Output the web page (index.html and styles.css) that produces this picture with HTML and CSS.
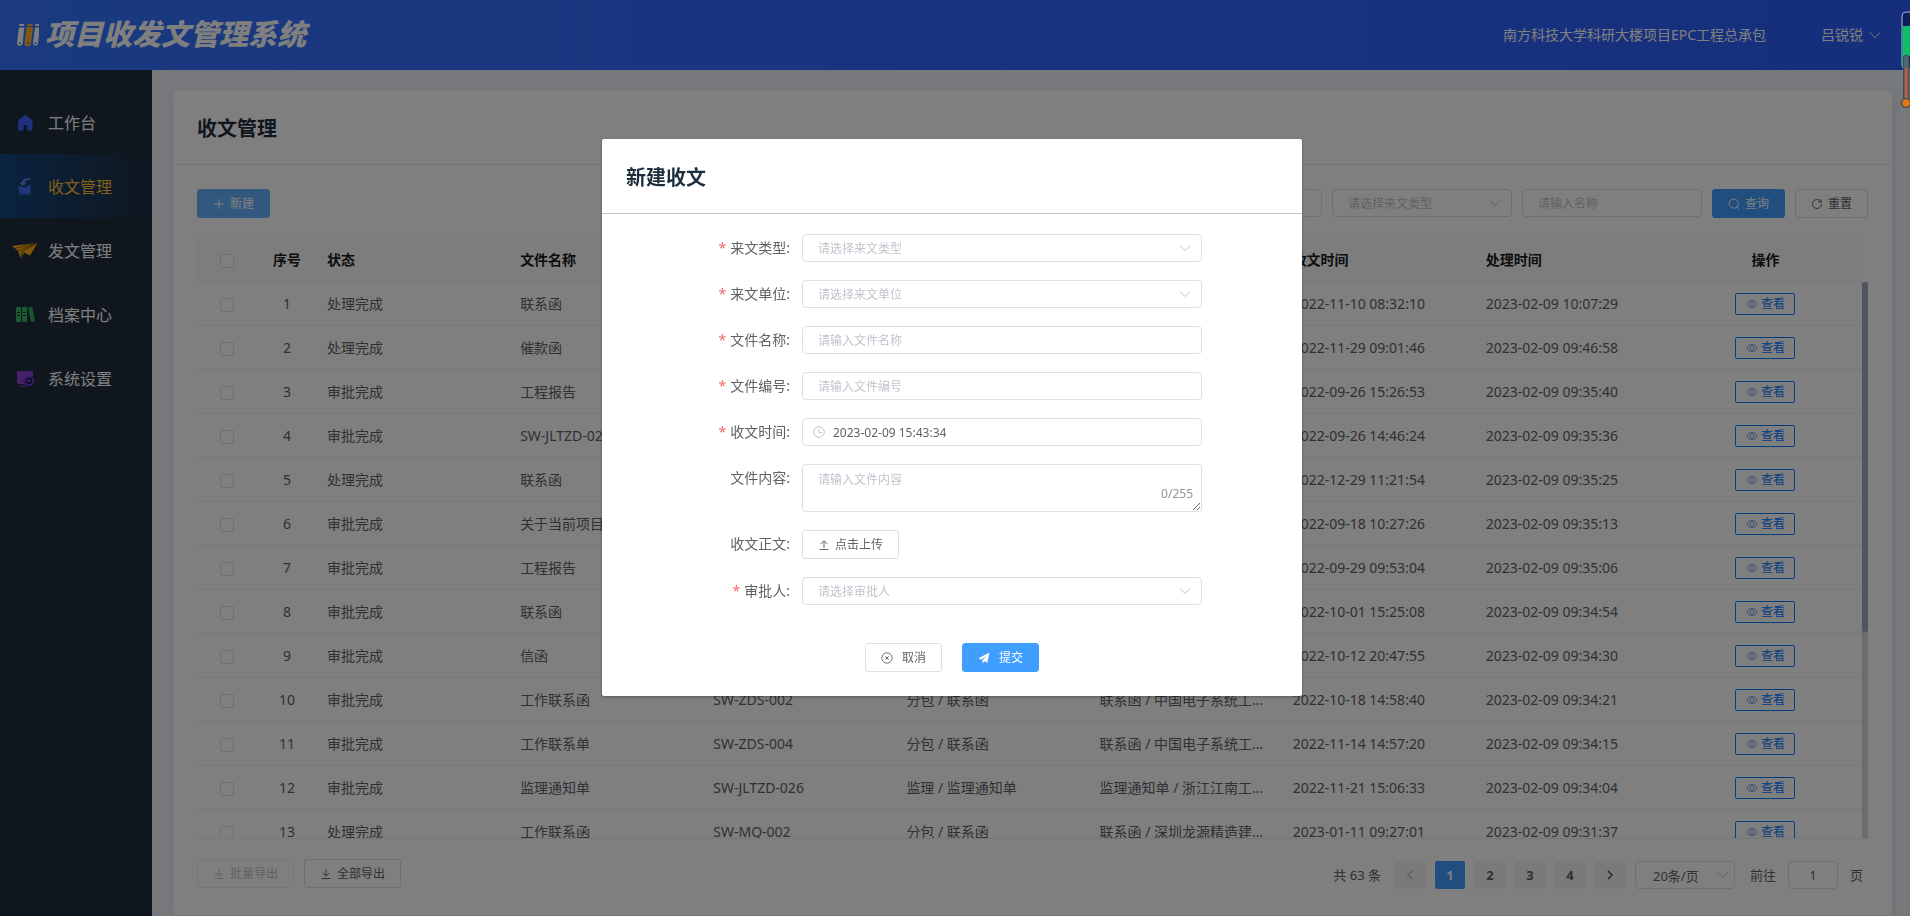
FILE: index.html
```html
<!DOCTYPE html>
<html lang="zh-CN">
<head>
<meta charset="utf-8">
<title>项目收发文管理系统</title>
<link rel="stylesheet" href="styles.css">
</head>
<body>
<svg class="defs" aria-hidden="true">
  <symbol id="i-down" viewBox="0 0 12 12"><path d="M1 3.5l5 5 5-5" fill="none" stroke="currentColor"/></symbol>
  <symbol id="i-plus" viewBox="0 0 12 12"><path d="M6 1v10M1 6h10" fill="none" stroke="currentColor"/></symbol>
  <symbol id="i-search" viewBox="0 0 12 12"><circle cx="5.8" cy="5.6" r="4.6" fill="none" stroke="currentColor"/><path d="M9 9l2 2" stroke="currentColor"/></symbol>
  <symbol id="i-refresh" viewBox="0 0 12 12"><path d="M9.8 3.6A4.5 4.5 0 1 0 10.5 6M10.3 1.2v2.9H7.4" fill="none" stroke="currentColor"/></symbol>
  <symbol id="i-view" viewBox="0 0 12 12"><path d="M.6 6C3.2 1.4 8.8 1.4 11.4 6 8.8 10.6 3.2 10.6.6 6z" fill="none" stroke="currentColor" stroke-width=".9"/><circle cx="6" cy="6" r="2" fill="none" stroke="currentColor" stroke-width=".9"/></symbol>
  <symbol id="i-download" viewBox="0 0 12 12"><path d="M6 1v7M2.8 5L6 8.2 9.2 5M1.5 10.5h9" fill="none" stroke="currentColor"/></symbol>
  <symbol id="i-upload" viewBox="0 0 12 12"><path d="M6 9V2M2.8 5L6 1.8 9.2 5M1.5 10.5h9" fill="none" stroke="currentColor"/></symbol>
  <symbol id="i-clock" viewBox="0 0 12 12"><circle cx="6" cy="6" r="5.3" fill="none" stroke="currentColor"/><path d="M6 2.8V6.5h2.8" fill="none" stroke="currentColor"/></symbol>
  <symbol id="i-close" viewBox="0 0 12 12"><circle cx="6" cy="6" r="5.2" fill="none" stroke="currentColor" stroke-width=".9"/><path d="M4.4 4.4l3.2 3.2M7.6 4.4L4.4 7.6" stroke="currentColor"/></symbol>
  <symbol id="i-send" viewBox="0 0 12 12"><path d="M11.5.5L.5 6.2l2.8 1.5L8.7 3.5 4.5 8.2v3.3l1.9-2.2 2.9 1.4z" fill="currentColor"/></symbol>
</svg>

<header class="topbar">
  <div class="brand">
    <svg class="brand-icon" viewBox="0 0 22 24" aria-hidden="true">
      <g transform="translate(3 0) skewX(-7)">
        <path d="M0 1h5v2H0zM16 1h5v2h-5z" fill="#fff"/>
        <path d="M0 4.500h5.500V20a2.700 2.700 0 0 1-5.500 0z" fill="#fff"/>
        <path d="M8 1h5.500v2H8zM7.500 4H14v16a3 3 0 0 1-6.500 0z" fill="#ffb02e"/>
        <path d="M16 4.500h5V20a2.500 2.500 0 0 1-5 0z" fill="#fff"/>
        <circle cx="2.700" cy="20" r="1" fill="#3472ff"/><circle cx="10.700" cy="20" r="1" fill="#3472ff"/><circle cx="18.500" cy="20" r="1" fill="#3472ff"/>
      </g>
    </svg>
    <span class="brand-name">项目收发文管理系统</span>
  </div>
  <div class="account">
    <span>南方科技大学科研大楼项目EPC工程总承包</span>
    <button class="user" type="button">吕锐锐 <svg class="icon"><use href="#i-down"/></svg></button>
  </div>
</header>

<div class="shell">
  <nav class="sidebar">
    <a class="nav-item" href="#home">
      <svg viewBox="0 0 26 20"><path d="M6.500 7.500L13.300 2 20 7.500V17h-4.300v-5.500h-4.600V17H6.500z" fill="#3a62ff" stroke="#3a62ff" stroke-linejoin="round"/></svg>工作台</a>
    <a class="nav-item active" href="#receive">
      <svg viewBox="0 0 26 20"><path d="M18.500 1C12 1 10 3.500 9.800 5.500L7.500 5.700l3.300 3 3.800-2.700-2-.3c.7-2 2.700-3 5.900-3.200z" fill="#5b86ea"/><path d="M6.500 9.500h4l1.500 1.500 3.500-1.500 3-2.500V17.500H7.500z" fill="#3f6cf0"/></svg>收文管理</a>
    <a class="nav-item" href="#send">
      <svg viewBox="0 0 26 20"><path d="M0 5L25.500 2 18 14.500l-6-3-3.500 6L6 10z" fill="#ffae12"/><path d="M6 10L25 2.300 9.800 11l-1.300 6M3 7.500l20-5" fill="none" stroke="#694707" stroke-width=".8"/></svg>发文管理</a>
    <a class="nav-item" href="#archive">
      <svg viewBox="0 0 26 20"><rect x="4" y="2" width="5" height="15" rx="1" fill="#38b46b"/><rect x="10" y="2" width="5" height="15" rx="1" fill="#38b46b"/><path d="M16 2.500l4.500-.5 2.500 14.500-4 .5z" fill="#2fa861"/><path d="M5 7.500h3M5 10.500h3M11 7.500h3M11 10.500h3" stroke="#14352a"/></svg>档案中心</a>
    <a class="nav-item" href="#settings">
      <svg viewBox="0 0 26 20"><path d="M5 2h16v5h-7l-3 5 1.500 3H6l-1-1z" fill="#8d42d0"/><path d="M7.500 17h7" stroke="#6e2bd0" stroke-width="1.500"/><path d="M14 7h6l2.500 4.700L20 16.500h-6l-2.500-4.800z" fill="#7e39d6"/><circle cx="17" cy="11.700" r="2.500" fill="none" stroke="#1f1640" stroke-width="1.500"/></svg>系统设置</a>
  </nav>

  <main class="content">
    <section class="card">
      <h1 class="card-title">收文管理</h1>
      <div class="card-body">
        <div class="toolbar">
          <button class="btn primary light" type="button"><svg class="icon"><use href="#i-plus"/></svg>新建</button>
          <div class="filters">
            <input class="field" type="text" aria-label="编号">
            <span class="select-wrap"><select class="field" aria-label="来文类型"><option>请选择来文类型</option></select><svg class="icon"><use href="#i-down"/></svg></span>
            <input class="field" type="text" aria-label="名称" placeholder="请输入名称">
            <button class="btn primary" type="button"><svg class="icon"><use href="#i-search"/></svg>查询</button>
            <button class="btn" type="button"><svg class="icon"><use href="#i-refresh"/></svg>重置</button>
          </div>
        </div>
        <div class="table-area">
          <div class="table-clip">
            <table class="table">
              <colgroup><col class="narrow"><col class="narrow"><col><col><col><col><col><col><col><col></colgroup>
              <thead><tr><th class="mid"><input type="checkbox" aria-label="全选"></th><th class="mid">序号</th><th>状态</th><th>文件名称</th><th>文件编号</th><th>来文类型</th><th>来文单位</th><th>收文时间</th><th>处理时间</th><th class="mid">操作</th></tr></thead>
              <tbody id="rows"></tbody>
            </table>
          </div>
          <div class="track"><div class="thumb"></div></div>
        </div>
        <footer class="card-foot">
          <div class="exports">
            <button class="btn" type="button" disabled><svg class="icon"><use href="#i-download"/></svg>批量导出</button>
            <button class="btn" type="button"><svg class="icon"><use href="#i-download"/></svg>全部导出</button>
          </div>
          <div class="pager">
            <span class="total">共 63 条</span>
            <button class="page off" type="button" aria-label="上一页"><svg class="icon prev"><use href="#i-down"/></svg></button>
            <button class="page current" type="button">1</button>
            <button class="page" type="button">2</button>
            <button class="page" type="button">3</button>
            <button class="page" type="button">4</button>
            <button class="page" type="button" aria-label="下一页"><svg class="icon next"><use href="#i-down"/></svg></button>
            <span class="select-wrap size"><select class="field" aria-label="每页条数"><option>20条/页</option></select><svg class="icon"><use href="#i-down"/></svg></span>
            <label class="jump">前往 <input class="field" type="text" value="1"> 页</label>
          </div>
        </footer>
      </div>
    </section>
  </main>
</div>

<div class="overlay">
  <form class="dialog" role="dialog" aria-labelledby="dlg-title">
    <h2 class="dialog-title" id="dlg-title">新建收文</h2>
    <div class="form">
      <label class="required" for="f-type">来文类型:</label>
      <span class="select-wrap"><select class="field" id="f-type"><option>请选择来文类型</option></select><svg class="icon"><use href="#i-down"/></svg></span>
      <label class="required" for="f-unit">来文单位:</label>
      <span class="select-wrap"><select class="field" id="f-unit"><option>请选择来文单位</option></select><svg class="icon"><use href="#i-down"/></svg></span>
      <label class="required" for="f-name">文件名称:</label>
      <input class="field" id="f-name" type="text" placeholder="请输入文件名称">
      <label class="required" for="f-code">文件编号:</label>
      <input class="field" id="f-code" type="text" placeholder="请输入文件编号">
      <label class="required" for="f-time">收文时间:</label>
      <span class="date-wrap"><svg class="icon"><use href="#i-clock"/></svg><input class="field" id="f-time" type="text" value="2023-02-09 15:43:34"></span>
      <label for="f-content">文件内容:</label>
      <span class="area-wrap"><textarea class="field" id="f-content" placeholder="请输入文件内容"></textarea><span class="count">0/255</span></span>
      <label for="f-file">收文正文:</label>
      <button class="btn" id="f-file" type="button"><svg class="icon"><use href="#i-upload"/></svg>点击上传</button>
      <label class="required" for="f-approver">审批人:</label>
      <span class="select-wrap"><select class="field" id="f-approver"><option>请选择审批人</option></select><svg class="icon"><use href="#i-down"/></svg></span>
    </div>
    <div class="dialog-actions">
      <button class="btn wide" type="button"><svg class="icon"><use href="#i-close"/></svg>取消</button>
      <button class="btn wide primary" type="button"><svg class="icon"><use href="#i-send"/></svg>提交</button>
    </div>
  </form>
</div>

<svg class="gauge" viewBox="0 0 10 100" aria-hidden="true">
  <rect x="2" y="2" width="12" height="57" rx="4" fill="#0d1f5c" stroke="#a9b4dc"/>
  <path d="M2.500 16H10v30H5L3 58h-.5z" fill="#12bd66"/>
  <rect x="3.500" y="45" width="5.500" height="46" rx="2.700" fill="#51676f" stroke="#38505c"/>
  <path d="M6.300 58v34" stroke="#e8541c" stroke-width="2"/>
  <circle cx="6" cy="93" r="4.500" fill="#e5760c" stroke="#44535c" stroke-width="1.500"/>
</svg>
<script src="rows.js"></script>
</body>
</html>
```

FILE: rows.js
```js
const records = [
  ['处理完成', '联系函', 'SW-ZDS-012', '分包 / 联系函', '联系函 / 中国电子系统工程有限公司', '2022-11-10 08:32:10', '2023-02-09 10:07:29'],
  ['处理完成', '催款函', 'SW-ZDS-011', '分包 / 联系函', '联系函 / 中国电子系统工程有限公司', '2022-11-29 09:01:46', '2023-02-09 09:46:58'],
  ['审批完成', '工程报告', 'SW-ZDS-010', '分包 / 联系函', '联系函 / 中国电子系统工程有限公司', '2022-09-26 15:26:53', '2023-02-09 09:35:40'],
  ['审批完成', 'SW-JLTZD-025', 'SW-JLTZD-025', '监理 / 监理通知单', '监理通知单 / 浙江江南工程有限公司', '2022-09-26 14:46:24', '2023-02-09 09:35:36'],
  ['处理完成', '联系函', 'SW-ZDS-009', '分包 / 联系函', '联系函 / 中国电子系统工程有限公司', '2022-12-29 11:21:54', '2023-02-09 09:35:25'],
  ['审批完成', '关于当前项目的联系函', 'SW-ZDS-008', '分包 / 联系函', '联系函 / 中国电子系统工程有限公司', '2022-09-18 10:27:26', '2023-02-09 09:35:13'],
  ['审批完成', '工程报告', 'SW-ZDS-007', '分包 / 联系函', '联系函 / 中国电子系统工程有限公司', '2022-09-29 09:53:04', '2023-02-09 09:35:06'],
  ['审批完成', '联系函', 'SW-ZDS-006', '分包 / 联系函', '联系函 / 中国电子系统工程有限公司', '2022-10-01 15:25:08', '2023-02-09 09:34:54'],
  ['审批完成', '信函', 'SW-ZDS-005', '分包 / 联系函', '联系函 / 中国电子系统工程有限公司', '2022-10-12 20:47:55', '2023-02-09 09:34:30'],
  ['审批完成', '工作联系函', 'SW-ZDS-002', '分包 / 联系函', '联系函 / 中国电子系统工程有限公司', '2022-10-18 14:58:40', '2023-02-09 09:34:21'],
  ['审批完成', '工作联系单', 'SW-ZDS-004', '分包 / 联系函', '联系函 / 中国电子系统工程有限公司', '2022-11-14 14:57:20', '2023-02-09 09:34:15'],
  ['审批完成', '监理通知单', 'SW-JLTZD-026', '监理 / 监理通知单', '监理通知单 / 浙江江南工程有限公司', '2022-11-21 15:06:33', '2023-02-09 09:34:04'],
  ['处理完成', '工作联系函', 'SW-MQ-002', '分包 / 联系函', '联系函 / 深圳龙源精造建设有限公司', '2023-01-11 09:27:01', '2023-02-09 09:31:37']
];
document.getElementById('rows').innerHTML = records.map((r, i) =>
  `<tr><td class="mid"><input type="checkbox" aria-label="选择第${i + 1}行"></td><td class="mid">${i + 1}</td>` +
  r.map(c => `<td>${c}</td>`).join('') +
  '<td class="mid"><button class="view" type="button"><svg class="icon"><use href="#i-view"/></svg>查看</button></td></tr>'
).join('');
```

FILE: styles.css
```css
* { box-sizing: border-box; }
html, body { height: 100%; }
body {
  margin: 0;
  display: flex;
  flex-direction: column;
  overflow: hidden;
  background: #f1f3f8;
  color: #606266;
  font: 14px/20px "Noto Sans", "Noto Sans CJK SC", sans-serif;
}
button, input, select, textarea { font: inherit; color: inherit; margin: 0; }
.defs { position: absolute; width: 0; height: 0; }
.icon { width: 12px; height: 12px; flex: none; }

.topbar {
  flex: none;
  height: 70px;
  padding: 0 29px 0 16px;
  display: flex;
  align-items: center;
  justify-content: space-between;
  background: linear-gradient(90deg, #3473ff, #2c5efb);
  color: #fff;
}
.brand { display: flex; align-items: center; gap: 6px; }
.brand-icon { width: 23px; height: 24px; }
.brand-name {
  padding-bottom: 2px;
  font-size: 29px;
  line-height: 40px;
  font-weight: 900;
  font-style: italic;
}
.account { display: flex; align-items: center; gap: 55px; }
.user { display: flex; align-items: center; gap: 6px; padding: 0; border: 0; background: none; }

.shell { flex: 1; min-height: 0; display: flex; }
.sidebar { flex: none; width: 152px; padding-top: 20px; background: #1f2d3d; }
.nav-item {
  display: flex;
  align-items: center;
  gap: 10px;
  height: 64px;
  padding: 2px 0 0 12px;
  color: #fff;
  font-size: 16px;
  text-decoration: none;
}
.nav-item svg { width: 26px; height: 20px; }
.nav-item.active { color: #ffc233; background: linear-gradient(90deg, #14467f, #1f2d3d); }

.content { flex: 1; min-width: 0; padding: 20px 18px 1px 21px; display: flex; }
.card {
  flex: 1;
  min-width: 0;
  display: flex;
  flex-direction: column;
  border-radius: 4px;
  background: #fff;
  box-shadow: 0 2px 12px rgba(0, 0, 0, .1);
}
.card-title {
  margin: 0;
  padding: 24px 24px 20px;
  border-bottom: 1px solid #e4e7f2;
  color: #1f2d3d;
  font-size: 20px;
  line-height: 30px;
}
.card-body { flex: 1; min-height: 0; display: flex; flex-direction: column; padding: 24px 24px 0; }
.toolbar { display: flex; justify-content: space-between; margin-bottom: 20px; }
.filters { display: flex; gap: 10px; }
.filters > .field, .filters > .select-wrap { width: 180px; }

.btn {
  display: inline-flex;
  align-items: center;
  justify-content: center;
  gap: 5px;
  height: 29px;
  padding: 0 15px;
  border: 1px solid #dcdfe6;
  border-radius: 3px;
  background: #fff;
  font-size: 12px;
  white-space: nowrap;
}
.btn.primary { border-color: #409eff; background: #409eff; color: #fff; }
.btn.light { border-color: #66b1ff; background: #66b1ff; }
.btn.wide { gap: 9px; width: 77px; }
.btn:disabled { border-color: #ebeef5; color: #c0c4cc; }

.field {
  display: block;
  width: 100%;
  height: 28px;
  padding: 1px 15px 0;
  border: 1px solid #dcdfe6;
  border-radius: 4px;
  background: #fff;
  font-size: 12px;
  line-height: 18px;
  outline: none;
}
.field::placeholder { color: #c0c4cc; opacity: 1; }
select.field { appearance: none; color: #c0c4cc; }
.select-wrap, .date-wrap, .area-wrap { position: relative; display: block; }
.select-wrap .icon { position: absolute; right: 11px; top: 8px; color: #c0c4cc; pointer-events: none; }

.table-area { flex: 1; min-height: 0; display: flex; border-bottom: 1px solid #ebeef5; }
.table-clip { flex: 1; min-width: 0; overflow: hidden; }
.table { width: 100%; table-layout: fixed; border-collapse: separate; border-spacing: 0; }
.table .narrow { width: 60px; }
.table th, .table td {
  height: 44px;
  padding: 0 10px;
  border-bottom: 1px solid #ebeef5;
  text-align: left;
  overflow: hidden;
  text-overflow: ellipsis;
  white-space: nowrap;
}
.table th { background: #fafafa; color: #1a1a1a; }
.table .mid { text-align: center; }
.table input {
  appearance: none;
  display: inline-block;
  width: 14px;
  height: 14px;
  border: 1px solid #dcdfe6;
  border-radius: 2px;
  background: #fff;
  vertical-align: middle;
}
.view {
  display: inline-flex;
  align-items: center;
  justify-content: center;
  gap: 3px;
  width: 60px;
  height: 22px;
  padding: 0;
  border: 1px solid #0a7cff;
  border-radius: 2px;
  background: #fff;
  color: #0a7cff;
  font-size: 12px;
  vertical-align: middle;
}
.view .icon { color: #6f8fe8; }
.track { flex: none; width: 6px; margin-top: 44px; background: #d5dae1; }
.thumb { height: 63%; border-radius: 3px; background: #9fabbd; }

.card-foot { flex: none; display: flex; justify-content: space-between; padding: 20px 5px 26px 0; }
.exports { display: flex; gap: 10px; }
.pager { display: flex; align-items: center; gap: 10px; padding-top: 2px; height: 30px; font-size: 13px; }
.total { margin-right: 4px; }
.page {
  display: flex;
  align-items: center;
  justify-content: center;
  width: 30px;
  height: 28px;
  padding: 0;
  border: 0;
  border-radius: 2px;
  background: #f4f4f5;
  font-weight: 700;
}
.page.current { background: #409eff; color: #fff; }
.page.off { color: #c0c4cc; }
.prev { transform: rotate(90deg); }
.next { transform: rotate(-90deg); }
.page .icon { width: 10px; height: 10px; stroke-width: 2; }
.size { width: 100px; }
.size select.field { padding-left: 17px; color: #606266; font-size: 13px; }
.size .icon { right: 6px; }
.jump { display: flex; align-items: center; gap: 12px; margin-left: 5px; }
.jump .field { width: 50px; padding: 0; text-align: center; font-size: 13px; }

.overlay {
  position: fixed;
  inset: 0;
  display: flex;
  justify-content: center;
  align-items: flex-start;
  padding: 139px 6px 0 0;
  background: rgba(0, 0, 0, .5);
}
.dialog {
  width: 700px;
  border-radius: 2px;
  background: #fff;
  box-shadow: 0 1px 3px rgba(0, 0, 0, .3);
}
.dialog-title {
  margin: 0;
  padding: 24px 24px 20px;
  border-bottom: 1px solid #c0c4cc;
  color: #1f2d3d;
  font-size: 20px;
  line-height: 30px;
}
.form {
  display: grid;
  grid-template-columns: 188px 400px;
  column-gap: 12px;
  row-gap: 18px;
  padding-top: 20px;
}
.form > label { text-align: right; line-height: 28px; }
.form .required::before { content: "*"; margin-right: 4px; color: #f56c6c; }
.form .btn { justify-self: start; }
.date-wrap .icon { position: absolute; left: 11px; top: 8px; color: #c0c4cc; }
.date-wrap .field { padding-left: 30px; }
textarea.field { height: 48px; padding: 6px 15px; resize: vertical; }
.count { position: absolute; right: 9px; bottom: 8px; color: #909399; font-size: 12px; line-height: 20px; }
.dialog-actions { display: flex; justify-content: center; gap: 20px; padding: 38px 0 24px; }
.gauge { position: fixed; right: 0; top: 10px; width: 10px; height: 100px; }
```
